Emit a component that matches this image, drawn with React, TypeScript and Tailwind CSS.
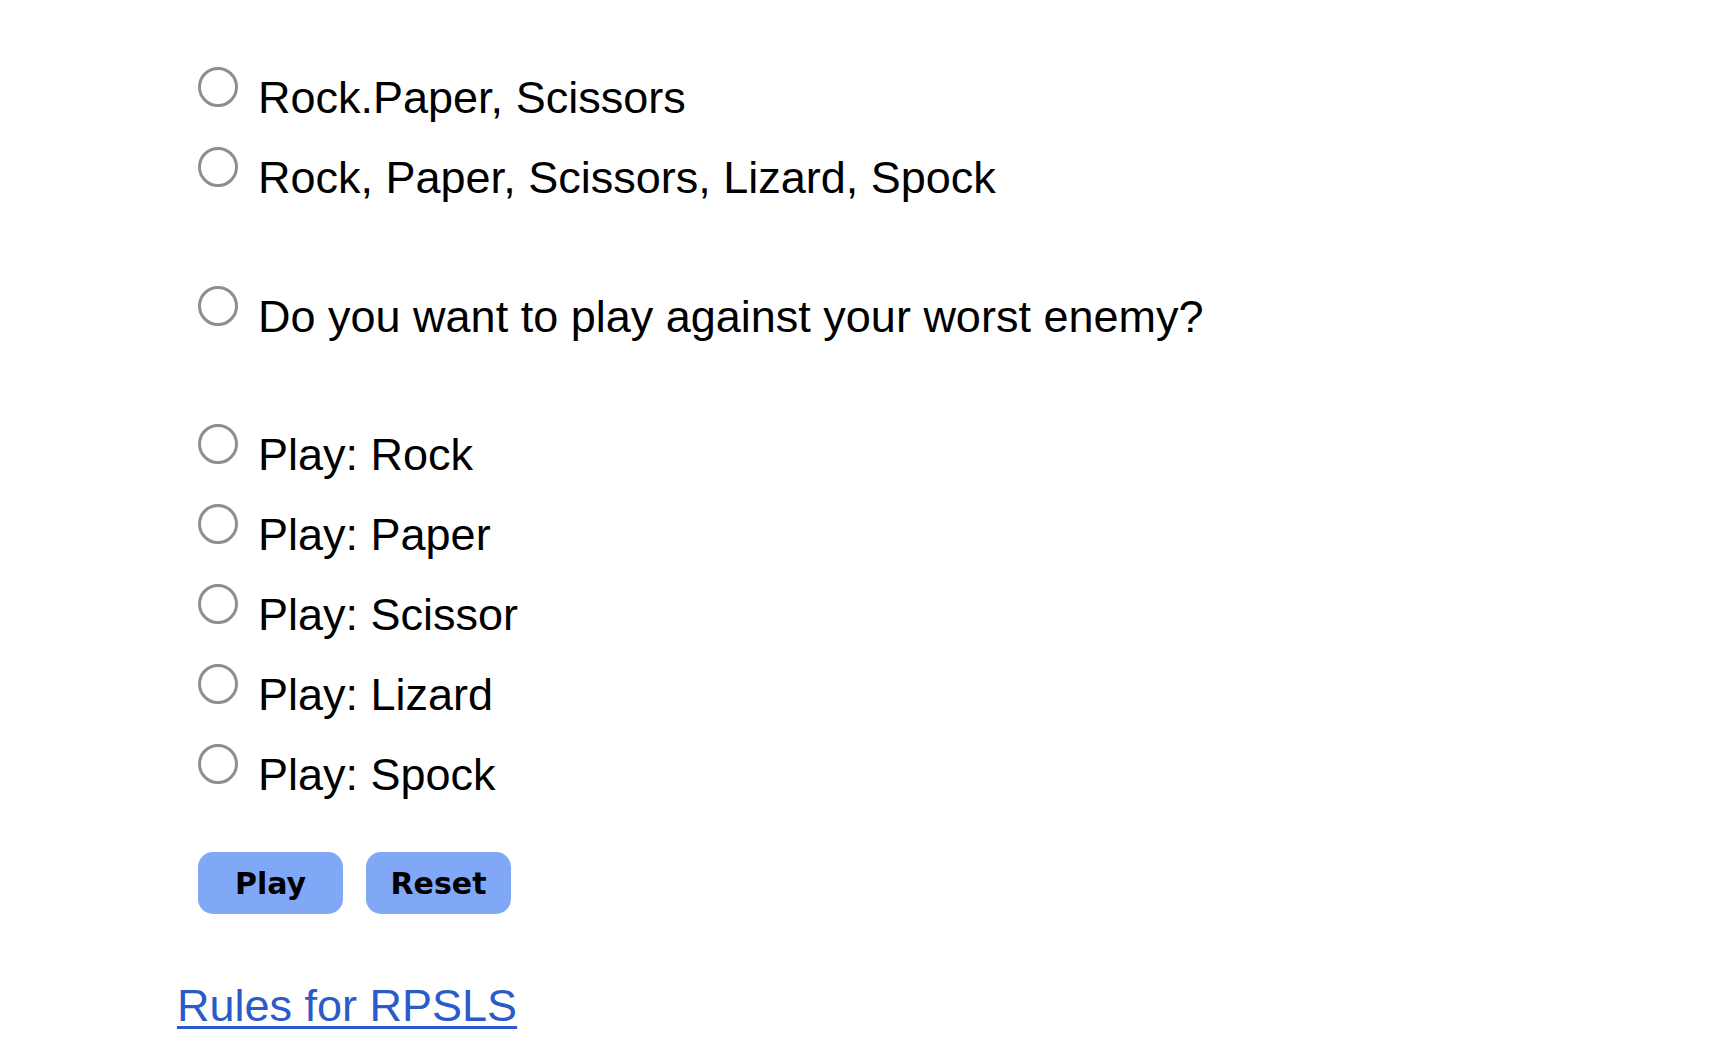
import React from "react";

function Radio() {
  return (
    <span className="mt-[9px] ml-[21px] mr-[20px] box-border block h-[40px] w-[40px] shrink-0 rounded-full border-[3px] border-[#8e8e8e] bg-white" />
  );
}

function Row({ label }: { label: string }) {
  return (
    <div className="flex h-[80px] items-start">
      <Radio />
      <span className="leading-[80px] text-[45px] whitespace-nowrap">{label}</span>
    </div>
  );
}

export default function App() {
  return (
    <div className="min-h-[1058px] w-full bg-white pl-[177px] pt-[58px] text-black [font-family:'Liberation_Sans',Arial,sans-serif]">
      <div className="flex flex-col">
        <Row label="Rock.Paper, Scissors" />
        <Row label="Rock, Paper, Scissors, Lizard, Spock" />
      </div>
      <div className="mt-[59px] flex flex-col">
        <Row label="Do you want to play against your worst enemy?" />
      </div>
      <div className="mt-[58px] flex flex-col">
        <Row label="Play: Rock" />
        <Row label="Play: Paper" />
        <Row label="Play: Scissor" />
        <Row label="Play: Lizard" />
        <Row label="Play: Spock" />
      </div>
      <div className="mt-[37px] ml-[21px] flex gap-[23px]">
        <button className="h-[62px] w-[145px] rounded-[15px] bg-[#80a8f7] text-[30px] font-bold text-black [font-family:'DejaVu_Sans',Verdana,sans-serif]">
          Play
        </button>
        <button className="h-[62px] w-[145px] rounded-[15px] bg-[#80a8f7] text-[30px] font-bold text-black [font-family:'DejaVu_Sans',Verdana,sans-serif]">
          Reset
        </button>
      </div>
      <div className="mt-[66px]">
        <a
          href="#"
          className="text-[45px] leading-[52px] text-[#2a5bc8] underline decoration-[3px] underline-offset-[5px]"
        >
          Rules for RPSLS
        </a>
      </div>
    </div>
  );
}
